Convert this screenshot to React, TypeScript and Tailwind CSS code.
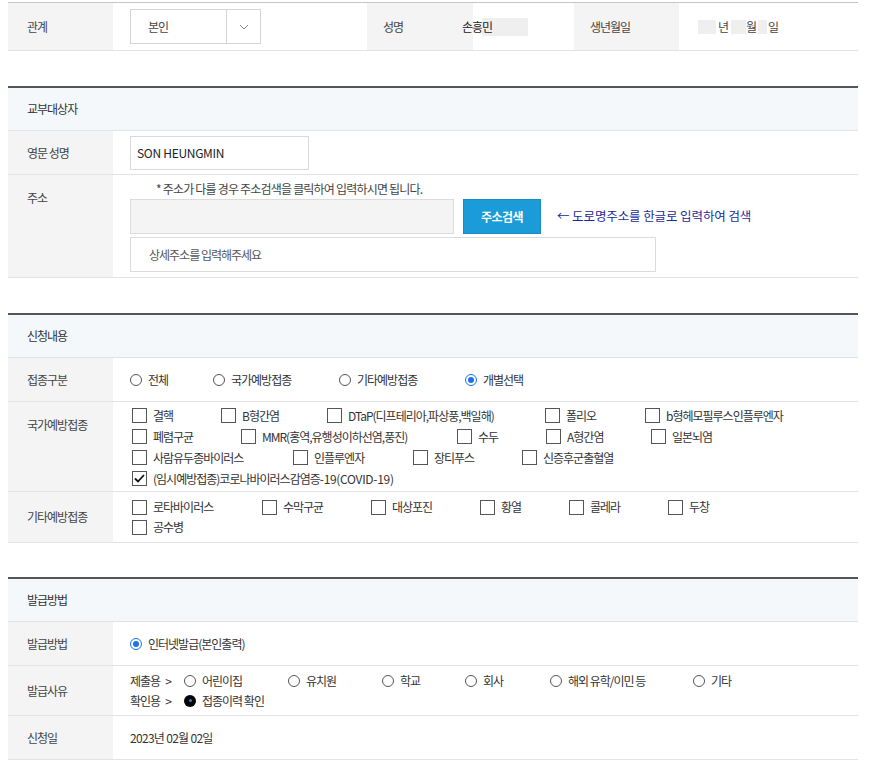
import React from 'react';

const font = "font-['Noto_Sans_CJK_KR',sans-serif]";

const Label: React.FC<{ children: React.ReactNode; top?: boolean }> = ({ children, top }) => (
  <div
    className={`w-[105px] shrink-0 bg-[#f4f4f4] pl-[19px] text-[#444] flex ${top ? 'items-start pt-[14px]' : 'items-center'}`}
  >
    {children}
  </div>
);

const Row: React.FC<{ h: string; label: string; top?: boolean; children: React.ReactNode }> = ({ h, label, top, children }) => (
  <div className={`flex border-b border-[#e3e3e3] ${h}`}>
    <Label top={top}>{label}</Label>
    <div className="flex-1 pl-[17px]">{children}</div>
  </div>
);

const SectionHead: React.FC<{ title: string; className?: string }> = ({ title, className = '' }) => (
  <div className={`h-[45px] border-t-2 border-b border-t-[#555] border-b-[#e3e3e3] bg-[#f5f8fb] pl-[19px] flex items-center text-[#333] ${className}`}>
    {title}
  </div>
);

const Radio: React.FC<{ checked?: boolean; dark?: boolean }> = ({ checked, dark }) => {
  if (dark)
    return (
      <span className="w-[12px] h-[12px] rounded-full bg-black flex items-center justify-center shrink-0">
        <span className="w-[3px] h-[3px] rounded-full bg-[#3a7be0]" />
      </span>
    );
  if (checked)
    return (
      <span className="w-[12px] h-[12px] rounded-full border-[1.5px] border-[#1a73e8] bg-white flex items-center justify-center shrink-0">
        <span className="w-[6px] h-[6px] rounded-full bg-[#1a73e8]" />
      </span>
    );
  return <span className="w-[12px] h-[12px] rounded-full border border-[#555] bg-white shrink-0" />;
};

const RadioItem: React.FC<{ w?: string; label: string; checked?: boolean; dark?: boolean }> = ({ w = '', label, checked, dark }) => (
  <div className={`flex items-center gap-[6px] shrink-0 ${w}`}>
    <Radio checked={checked} dark={dark} />
    <span>{label}</span>
  </div>
);

const Check: React.FC<{ w?: string; label: React.ReactNode; checked?: boolean }> = ({ w = '', label, checked }) => (
  <div className={`flex items-center gap-[6px] shrink-0 ${w}`}>
    <span className="w-[15px] h-[15px] border border-[#555] bg-white flex items-center justify-center shrink-0">
      {checked && (
        <svg width="11" height="9" viewBox="0 0 11 9">
          <polyline points="1,4.5 4,7.5 10,1" fill="none" stroke="#111" strokeWidth="1.8" />
        </svg>
      )}
    </span>
    <span>{label}</span>
  </div>
);

export default function App() {
  return (
    <div className={`${font} text-[12px] tracking-[-1px] text-[#333] bg-white min-h-[762px] pt-[2px]`}>
      <div className="ml-[8px] w-[850px]">
        {/* 관계 / 성명 / 생년월일 */}
        <div className="flex h-[49px] border-t border-b border-t-[#c8c8c8] border-b-[#e3e3e3]">
          <Label>관계</Label>
          <div className="w-[254px] pl-[17px] flex items-center">
            <div className="w-[131px] h-[35px] border border-[#d5d5d5] flex">
              <div className="flex-1 pl-[17px] flex items-center text-[#444]">본인</div>
              <div className="w-[34px] border-l border-[#d5d5d5] flex items-center justify-center">
                <svg width="10" height="6" viewBox="0 0 10 6">
                  <polyline points="1,1 5,5 9,1" fill="none" stroke="#888" strokeWidth="1" />
                </svg>
              </div>
            </div>
          </div>
          <div className="w-[106px] bg-[#f4f4f4] pl-[16px] flex items-center text-[#444]">성명</div>
          <div className="w-[101px] flex items-center">
            <span className="-ml-[11px] text-[#222]">손흥</span>
            <span className="bg-[#efefef] pr-[36px] text-[#222]">민</span>
          </div>
          <div className="w-[105px] bg-[#f4f4f4] pl-[16px] flex items-center text-[#444]">생년월일</div>
          <div className="flex-1 pl-[19px] flex items-center text-[#444]">
            <span className="w-[18px] h-[14px] bg-[#efefef]" />
            <span className="ml-[2px]">년</span>
            <span className="ml-[3px] w-[15px] h-[14px] bg-[#efefef]" />
            <span>월</span>
            <span className="ml-[2px] w-[9px] h-[14px] bg-[#efefef]" />
            <span className="ml-[1px]">일</span>
          </div>
        </div>

        {/* 교부대상자 */}
        <SectionHead title="교부대상자" className="mt-[35px]" />
        <Row h="h-[44px]" label="영문 성명">
          <div className="h-full flex items-center">
            <div className="w-[179px] h-[34px] border border-[#d9d9d9] pl-[6px] flex items-center text-[#222] tracking-[-0.3px]">
              SON HEUNGMIN
            </div>
          </div>
        </Row>
        <Row h="h-[103px]" label="주소" top>
          <div className="pt-[4px]">
            <div className="pl-[26px] h-[19px] flex items-center text-[#444] tracking-[-0.8px]">
              * 주소가 다를 경우 주소검색을 클릭하여 입력하시면 됩니다.
            </div>
            <div className="flex items-center mt-[1px]">
              <div className="w-[324px] h-[35px] border border-[#dcdcdc] bg-[#f4f4f4]" />
              <button className="ml-[9px] w-[78px] h-[35px] bg-[#1b9bd8] border border-[#168bc4] text-white font-bold tracking-[-0.5px]">
                주소검색
              </button>
              <span className="ml-[16px] text-[#1b2a9a] text-[12.5px] tracking-[-0.1px]">← 도로명주소를 한글로 입력하여 검색</span>
            </div>
            <div className="mt-[3px] w-[526px] h-[35px] border border-[#dcdcdc] pl-[18px] flex items-center text-[#555]">
              상세주소를 입력해주세요
            </div>
          </div>
        </Row>

        {/* 신청내용 */}
        <SectionHead title="신청내용" className="mt-[35px]" />
        <Row h="h-[44px]" label="접종구분">
          <div className="h-full flex items-center">
            <RadioItem w="w-[83px]" label="전체" />
            <RadioItem w="w-[126px]" label="국가예방접종" />
            <RadioItem w="w-[126px]" label="기타예방접종" />
            <RadioItem label="개별선택" checked />
          </div>
        </Row>
        <Row h="h-[90px]" label="국가예방접종" top>
          <div className="pt-[3px] pl-[2px]">
            <div className="flex h-[21px]">
              <Check w="w-[89px]" label="결핵" />
              <Check w="w-[106px]" label="B형간염" />
              <Check w="w-[218px]" label="DTaP(디프테리아,파상풍,백일해)" />
              <Check w="w-[100px]" label="폴리오" />
              <Check label="b형헤모필루스인플루엔자" />
            </div>
            <div className="flex h-[21px]">
              <Check w="w-[109px]" label="폐렴구균" />
              <Check w="w-[216px]" label="MMR(홍역,유행성이하선염,풍진)" />
              <Check w="w-[89px]" label="수두" />
              <Check w="w-[105px]" label="A형간염" />
              <Check label="일본뇌염" />
            </div>
            <div className="flex h-[21px]">
              <Check w="w-[161px]" label="사람유두종바이러스" />
              <Check w="w-[120px]" label="인플루엔자" />
              <Check w="w-[109px]" label="장티푸스" />
              <Check label="신증후군출혈열" />
            </div>
            <div className="flex h-[21px]">
              <Check
                label={
                  <>
                    (임시예방접종)코로나바이러스감염증<span className="tracking-[-0.3px]">-19(COVID-19)</span>
                  </>
                }
                checked
              />
            </div>
          </div>
        </Row>
        <Row h="h-[51px]" label="기타예방접종">
          <div className="h-full flex flex-col justify-center pl-[2px]">
            <div className="flex h-[20px]">
              <Check w="w-[130px]" label="로타바이러스" />
              <Check w="w-[109px]" label="수막구균" />
              <Check w="w-[109px]" label="대상포진" />
              <Check w="w-[89px]" label="황열" />
              <Check w="w-[99px]" label="콜레라" />
              <Check label="두창" />
            </div>
            <div className="flex h-[20px]">
              <Check label="공수병" />
            </div>
          </div>
        </Row>

        {/* 발급방법 */}
        <SectionHead title="발급방법" className="mt-[34px]" />
        <Row h="h-[44px]" label="발급방법">
          <div className="h-full flex items-center">
            <RadioItem label="인터넷발급(본인출력)" checked />
          </div>
        </Row>
        <Row h="h-[50px]" label="발급사유">
          <div className="h-full flex flex-col justify-center">
            <div className="flex items-center h-[20px]">
              <span className="w-[54px] shrink-0">
                제출용<span className="ml-[5px]">&gt;</span>
              </span>
              <RadioItem w="w-[104px]" label="어린이집" />
              <RadioItem w="w-[94px]" label="유치원" />
              <RadioItem w="w-[83px]" label="학교" />
              <RadioItem w="w-[85px]" label="회사" />
              <RadioItem w="w-[143px]" label="해외 유학/이민 등" />
              <RadioItem label="기타" />
            </div>
            <div className="flex items-center h-[20px]">
              <span className="w-[54px] shrink-0">
                확인용<span className="ml-[5px]">&gt;</span>
              </span>
              <RadioItem label="접종이력 확인" dark />
            </div>
          </div>
        </Row>
        <Row h="h-[44px]" label="신청일">
          <div className="h-full flex items-center tracking-[-0.7px]">2023년 02월 02일</div>
        </Row>
      </div>
    </div>
  );
}
